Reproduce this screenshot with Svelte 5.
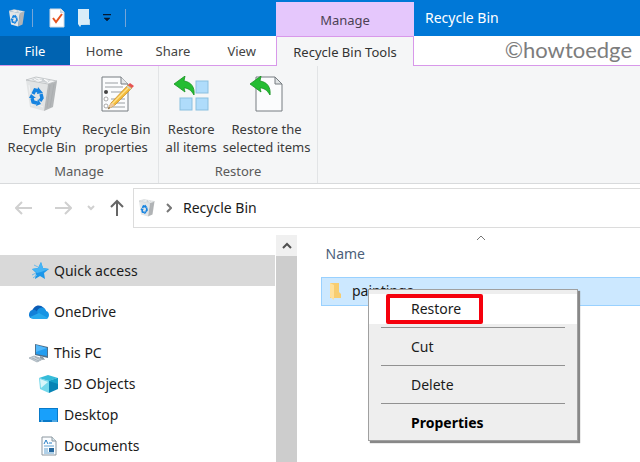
<!-- RecycleBinWindow.svelte -->
<script lang="ts">
  type NavItem = { label: string; icon: string; child?: boolean; gap?: boolean };

  // Sidebar entries
  const navItems: NavItem[] = [
    { label: 'Quick access', icon: 'star' },
    { label: 'OneDrive', icon: 'cloud', gap: true },
    { label: 'This PC', icon: 'pc', gap: true },
    { label: '3D Objects', icon: 'cube', child: true },
    { label: 'Desktop', icon: 'desktop', child: true },
    { label: 'Documents', icon: 'document', child: true }
  ];

  const menuItems = ['Restore', 'Cut', 'Delete', 'Properties'];

  let selectedNav = $state('Quick access');
  let hovered = $state('Restore');
</script>

{#snippet bin(size: number)}
  <svg width={size} height={size} viewBox="0 0 36 36" aria-hidden="true">
    <path d="M2 4 L24 8 L20 35 L6 31 Z" fill="#e2e4e5" />
    <path d="M24 8 L33 5 L29 31 L20 35 Z" fill="#b3b6b8" />
    <path d="M2 4 L12 1 L33 5 L24 8 Z" fill="#f4f5f6" stroke="#b6babd" stroke-width=".8" />
    <path d="M7 4 L11 2 L15 4 L19 2 L22 5 L27 4 L23 7 Z" fill="#cdd1d4" />
    <path d="M10 3 L14 5 L18 4 M20 3 L24 6" fill="none" stroke="#fff" />
    <path d="M26 9 L23 32 M30 8 L26 31" stroke="#a4a8ab" stroke-width=".6" />
    <path d="M5 9 L8 30 M10 27 L19 31" stroke="#f5f6f7" stroke-width=".8" />
    <g fill="none" stroke="#1683e0" stroke-width="3.4">
      <path d="M9 18 L11 14 L15 15" />
      <path d="M17 18 L18 22 L16 25" />
      <path d="M13 27 L9 26 L8 22" />
    </g>
    <path d="M14 11 L19 17 L13 18 Z M17 28 L12 30 L14 23 Z M5 22 L7 18 L12 22 Z" fill="#1683e0" />
  </svg>
{/snippet}

{#snippet undoArrow()}
  <path
    d="M1 8 L12 0 L11 5 C18 6 22 11 21 19 C18 14 15 12 11 12 L12 16 Z"
    fill="#24bd32"
    stroke="#169222"
    stroke-width=".8"
  />
{/snippet}

{#snippet navIcon(name: string)}
  <svg width="20" height="20" viewBox="0 0 20 20" aria-hidden="true">
    {#if name === 'star'}
      <path d="M12 1 L14 7 L20 8 L15 12 L16 18 L11 15 L6 18 L7 12 L3 8 L9 7 Z" fill="#1c97ea" />
      <path d="M12 1 L14 7 L20 8 L12 11 L8 12 L3 8 L9 7 Z" fill="#45b4f5" />
      <path d="M3 14 L7 12 M4 17 L8 14 M5 4 L9 6" stroke="#6dbbe8" />
    {:else if name === 'cloud'}
      <path d="M3 10 C4 4 10 1 15 6 L17 9 L6 14 Z" fill="#0a5bb5" />
      <path d="M1 16 C-2 11 2 7 6 8 L17 16 Z" fill="#1280d8" />
      <path d="M8 9 C11 4 16 5 17 9 C21 10 21 16 17 17 L9 13 Z" fill="#1694e4" />
      <path d="M1 15 L10 11 L19 16 Q18 17 16 17 L4 17 Q2 17 1 15 Z" fill="#27a9ed" />
    {:else if name === 'pc'}
      <path d="M6 1 L19 4 L19 15 L6 12 Z" fill="#50708b" />
      <path d="M7 2 L18 5 L18 13 L7 11 Z" fill="#239df0" />
      <path d="M7 2 L18 5 L7 9 Z" fill="#53b8fa" />
      <path d="M11 13 L14 14 L16 17 L11 16 Z" fill="#8c98a1" />
      <path d="M0 15 L5 13 L14 16 L8 19 Z" fill="#cbd3d9" stroke="#8999a5" stroke-width=".6" />
      <path d="M3 15 L10 18 M6 14 L12 17" stroke="#8999a5" stroke-width=".6" />
    {:else if name === 'cube'}
      <path d="M0 4 L10 7 L10 19 L1 15 Z" fill="#73d8eb" />
      <path d="M10 7 L19 4 L19 15 L10 19 Z" fill="#0784b5" />
      <path d="M0 4 L9 1 L19 4 L10 7 Z" fill="#36bcd9" />
      <path d="M1 5 L9 8 L2 14 Z" fill="#d7f6fa" />
      <path d="M10 7 L19 4 L19 10 Z" fill="#16a2c9" />
    {:else if name === 'desktop'}
      <rect x="0" y="3" width="19" height="14" fill="#087ac9" />
      <rect x="1" y="4" width="17" height="11" fill="#18a0fb" />
      <path d="M2 16 H4 M13 16 H18" stroke="#9ad5fa" />
    {:else}
      <path d="M3 1 H13 L17 5 V19 H3 Z" fill="#fbfdff" stroke="#8d98a0" />
      <path d="M13 1 V5 H17" fill="#d9e8ee" stroke="#8d98a0" />
      <path d="M5 8 L7 4 L9 8 M10 7 H13" fill="none" stroke="#267ec4" />
      <path d="M5 10 H15 M5 13 H9 M5 15 H9 M5 17 H15" stroke="#65a3d1" />
      <rect x="10" y="12" width="5" height="4" fill="#27699f" />
    {/if}
  </svg>
{/snippet}

<div class="window">
  <header>
    <div class="quick-bar">
      {@render bin(18)}
      <span class="divider"></span>
      <button class="quick check" aria-label="Properties">
        <svg width="16" height="20" viewBox="0 0 16 20">
          <path d="M1 1 H12 L15 4 V19 H1 Z" fill="#fff" stroke="#d4dbe2" />
          <path d="M11 1 V5 H15" fill="#c9d5df" />
          <path d="M4 10 L7 14 L13 6" fill="none" stroke="#e6531f" stroke-width="2" />
        </svg>
      </button>
      <button class="quick folder" aria-label="New folder">
        <svg width="14" height="20" viewBox="0 0 14 20">
          <path d="M1 1 H12 V11 L13 12 V17 H4 L3 19 L1 16 Z" fill="#d9edf8" />
          <path d="M12 11 L13 12 V17 H4 L3 19 L3 17 L12 16 Z" fill="#b9d9ec" />
        </svg>
      </button>
      <button class="quick more" aria-label="Customize toolbar">
        <svg width="8" height="8" viewBox="0 0 8 8">
          <path d="M0 0 H8 V1 H0 Z M1 4 H7 L4 7 Z" fill="#061a33" stroke="#061a33" stroke-width=".5" />
        </svg>
      </button>
      <span class="divider"></span>
    </div>
    <div class="context-head"><span>Manage</span></div>
    <h1>Recycle Bin</h1>

    <div class="tabs">
      <button class="file">File</button>
      <button>Home</button>
      <button>Share</button>
      <button>View</button>
    </div>
    <button class="active-tab">Recycle Bin Tools</button>
    <div class="watermark">©howtoedge</div>
  </header>

  <section class="ribbon">
    <div class="group">
      <div class="tools">
        <button>
          {@render bin(36)}
          <span>Empty<br />Recycle Bin</span>
        </button>
        <button>
          <svg width="36" height="36" viewBox="0 0 36 36" aria-hidden="true">
            <path d="M4 1 H23 L30 8 V35 H4 Z" fill="#fbfcfd" stroke="#777d81" />
            <path d="M23 1 V8 H30" fill="#e5e8ea" stroke="#777d81" />
            <circle cx="8" cy="16" r="2" fill="#444" />
            <circle cx="8" cy="23" r="2" fill="#fff" stroke="#888" stroke-width=".7" />
            <circle cx="8" cy="30" r="2" fill="#fff" stroke="#888" stroke-width=".7" />
            <path d="M7 7 H20 M7 11 H25 M13 16 H26 M13 23 H27 M13 27 H27 M13 31 H27" stroke="#9a9fa3" />
            <path d="M10 33 L13 27 L30 9 L34 12 L17 29 Z" fill="#f3bb3a" stroke="#c58b27" stroke-width=".7" />
            <path d="M14 28 L31 11" stroke="#ffe28b" stroke-width="1.5" />
            <path d="M30 9 L32 7 L36 10 L34 12 Z" fill="#e55353" />
            <path d="M29 10 L33 13" stroke="#c8d0d6" stroke-width="1.5" />
            <path d="M10 33 L13 27 L17 29 Z" fill="#efc9a0" />
            <path d="M10 33 L11 31 L12 32 Z" fill="#444" />
          </svg>
          <span>Recycle Bin<br />properties</span>
        </button>
      </div>
      <p>Manage</p>
    </div>
    <div class="group">
      <div class="tools">
        <button>
          <svg width="36" height="36" viewBox="0 0 36 36" aria-hidden="true">
            <g fill="#afdcfb" stroke="#8abfdf">
              <rect x="23" y="5" width="12" height="12" />
              <rect x="7" y="22" width="12" height="12" />
              <rect x="23" y="22" width="12" height="12" />
            </g>
            {@render undoArrow()}
          </svg>
          <span>Restore<br />all items</span>
        </button>
        <button>
          <svg width="36" height="36" viewBox="0 0 36 36" aria-hidden="true">
            <path d="M7 1 H26 L33 8 V35 H7 Z" fill="#fbfcfd" stroke="#777d81" />
            <path d="M26 1 V8 H33 Z" fill="#dfe3e5" stroke="#777d81" />
            {@render undoArrow()}
          </svg>
          <span>Restore the<br />selected items</span>
        </button>
      </div>
      <p>Restore</p>
    </div>
  </section>

  <nav class="address-row" aria-label="Address">
    <div class="history">
      <button aria-label="Back" disabled>
        <svg width="18" height="14" viewBox="0 0 18 14"><path d="M17 7 H2 M7 1 L1 7 L7 13" /></svg>
      </button>
      <button aria-label="Forward" disabled>
        <svg width="18" height="14" viewBox="0 0 18 14"><path d="M1 7 H16 M11 1 L17 7 L11 13" /></svg>
      </button>
      <button class="recent" aria-label="Recent locations" disabled>
        <svg width="8" height="6" viewBox="0 0 8 6"><path d="M1 1 L4 4 L7 1" /></svg>
      </button>
      <button class="up" aria-label="Up">
        <svg width="14" height="18" viewBox="0 0 14 18"><path d="M7 17 V2 M1 8 L7 2 L13 8" /></svg>
      </button>
    </div>
    <div class="address">
      {@render bin(18)}
      <svg class="crumb" width="6" height="10" viewBox="0 0 6 10"><path d="M1 1 L5 5 L1 9" /></svg>
      <a href="#recycle-bin">Recycle Bin</a>
    </div>
  </nav>

  <div class="body">
    <aside>
      {#each navItems as item}
        <button
          class="nav-item"
          class:child={item.child}
          class:gap={item.gap}
          class:selected={selectedNav === item.label}
          onclick={() => (selectedNav = item.label)}
        >
          {@render navIcon(item.icon)}
          {item.label}
        </button>
      {/each}
    </aside>

    <div class="scrollbar">
      <button aria-label="Scroll up">
        <svg width="10" height="8" viewBox="0 0 10 8"><path d="M1 6 L5 2 L9 6" /></svg>
      </button>
      <div class="thumb"></div>
    </div>

    <main>
      <div class="sort">
        <svg width="10" height="6" viewBox="0 0 10 6"><path d="M1 5 L5 1 L9 5" /></svg>
      </div>
      <table>
        <thead>
          <tr><th>Name</th></tr>
        </thead>
        <tbody>
          <tr>
            <td>
              <div class="file-name">
                <svg width="12" height="18" viewBox="0 0 12 18" aria-hidden="true">
                  <path d="M0 1 H9 V10 L11 12 V16 H0 Z" fill="#f7cd70" />
                  <path d="M0 1 L4 3 V18 L0 15 Z" fill="#ffe09a" />
                </svg>
                paintings
              </div>
            </td>
          </tr>
        </tbody>
      </table>

      <div class="menu" role="menu">
        {#each menuItems as item, i}
          {#if i > 0}<hr />{/if}
          <button
            role="menuitem"
            class:hovered={hovered === item}
            class:bold={item === 'Properties'}
            onmouseenter={() => (hovered = item)}
          >
            {item}
          </button>
        {/each}
        <div class="marker"></div>
      </div>
    </main>
  </div>
</div>

<style>
  :global(body) {
    background: #fff;
    overflow: hidden;
  }

  .window {
    display: flex;
    flex-direction: column;
    min-height: 100vh;
    font-family: 'Noto Sans', 'Open Sans', sans-serif;
    font-size: 14px;
    line-height: 20px;
    color: #1b1b1b;
  }

  button {
    margin: 0;
    padding: 0;
    border: 0;
    background: none;
    font: inherit;
    color: inherit;
  }

  svg {
    display: block;
    flex: none;
  }

  /* Title bar and tabs */
  header {
    display: grid;
    grid-template-columns: 276px 138px 1fr;
    grid-template-rows: 36px 30px;
    font-size: 13px;
  }

  .quick-bar,
  h1,
  .context-head {
    background: #0078d7;
  }

  .quick-bar {
    display: flex;
    align-items: center;
    padding-left: 8px;
  }

  .divider {
    width: 1px;
    height: 18px;
    margin-left: 6px;
    background: #75a5d8;
  }

  .quick.check {
    margin-left: 16px;
  }

  .quick.folder {
    margin-left: 12px;
  }

  .quick.more {
    margin: 0 8px 0 12px;
  }

  .context-head {
    padding-top: 2px;
  }

  .context-head span {
    display: flex;
    align-items: center;
    justify-content: center;
    height: 34px;
    padding-top: 2px;
    box-sizing: border-box;
    background: #e5c7fc;
    color: #4c4254;
  }

  h1 {
    margin: 0;
    padding-left: 11px;
    color: #fff;
    font-size: 14px;
    font-weight: 400;
    line-height: 36px;
  }

  .tabs {
    display: flex;
    border-bottom: 1px solid #d898ea;
    color: #444;
  }

  .tabs button {
    flex: 1;
  }

  .tabs .file {
    flex: 0 0 70px;
    background: #0063b1;
    color: #fff;
  }

  .active-tab {
    border: 1px solid #d898ea;
    border-bottom: 0;
    background: #f5f6f7;
    color: #333;
  }

  .watermark {
    padding-right: 8px;
    border-bottom: 1px solid #d898ea;
    color: #7d7d7d;
    font-family: Lato, sans-serif;
    font-size: 22px;
    line-height: 28px;
    text-align: right;
  }

  /* Ribbon */
  .ribbon {
    display: flex;
    height: 117px;
    border-bottom: 1px solid #d8dadc;
    background: #f5f6f7;
    color: #3b3b3b;
    font-size: 13px;
    line-height: 18px;
  }

  .group {
    display: flex;
    flex-direction: column;
    width: 158px;
    border-right: 1px solid #e2e4e6;
  }

  .tools {
    display: flex;
    justify-content: center;
    gap: 6px;
    padding-top: 10px;
  }

  .tools button {
    display: flex;
    flex-direction: column;
    align-items: center;
    gap: 8px;
    white-space: nowrap;
  }

  .group p {
    margin: 6px 0 0;
    color: #5a5a5a;
    text-align: center;
  }

  /* Address bar */
  .address-row {
    display: flex;
    align-items: center;
    padding-top: 4px;
  }

  .history {
    display: flex;
    align-items: center;
    gap: 21px;
    width: 118px;
    padding-left: 15px;
  }

  .history svg,
  .crumb,
  .scrollbar svg,
  .sort svg {
    fill: none;
    stroke: #d0d0d0;
    stroke-width: 2;
  }

  .history .recent {
    margin-left: -6px;
  }

  .history .up {
    margin-left: -6px;
  }

  .history .up svg {
    stroke: #666;
  }

  .address {
    display: flex;
    flex: 1;
    align-items: center;
    height: 38px;
    padding-left: 4px;
    border: 1px solid #dcdcdc;
    border-right: 0;
  }

  .crumb {
    margin: 0 11px 0 10px;
    stroke: #777;
  }

  .address a {
    color: inherit;
    text-decoration: none;
  }

  /* Body */
  .body {
    display: flex;
    flex: 1;
  }

  aside {
    width: 276px;
    padding-top: 27px;
  }

  .nav-item {
    display: flex;
    align-items: center;
    gap: 5px;
    width: 275px;
    height: 31px;
    padding-left: 29px;
    text-align: left;
  }

  .nav-item.gap {
    margin-top: 10px;
  }

  .nav-item.child {
    padding-left: 39px;
  }

  .nav-item.selected {
    background: #d9d9d9;
  }

  .scrollbar {
    display: flex;
    flex-direction: column;
    width: 21px;
    padding-top: 7px;
  }

  .scrollbar button {
    display: grid;
    place-items: center;
    height: 21px;
    background: #f0f0f0;
  }

  .scrollbar svg {
    stroke: #505050;
  }

  .thumb {
    flex: 1;
    background: #cdcdcd;
  }

  main {
    position: relative;
    flex: 1;
    padding-left: 24px;
  }

  .sort {
    display: flex;
    justify-content: center;
    padding-top: 7px;
  }

  .sort svg {
    stroke: #777;
    stroke-width: 1;
  }

  table {
    width: 100%;
    border-collapse: collapse;
  }

  th {
    height: 36px;
    padding: 0 4px 10px;
    box-sizing: border-box;
    color: #4c607a;
    font-weight: 400;
    text-align: left;
    vertical-align: middle;
  }

  td {
    padding: 0;
    border: 1px solid #99d1ff;
    border-right: 0;
    background: #cce8ff;
  }

  .file-name {
    display: flex;
    align-items: center;
    gap: 10px;
    height: 27px;
    padding-left: 8px;
  }

  /* Context menu */
  .menu {
    position: absolute;
    top: 61px;
    left: 71px;
    display: flex;
    flex-direction: column;
    width: 208px;
    padding: 4px 0 2px;
    border: 1px solid #a0a0a0;
    background: #eee;
    box-shadow: 2px 2px 1px #888;
  }

  .menu button {
    height: 30px;
    padding-left: 42px;
    text-align: left;
  }

  .menu .hovered {
    background: #fff;
  }

  .menu .bold {
    color: #000;
    font-weight: 700;
  }

  .menu hr {
    width: 184px;
    height: 1px;
    margin: 3px auto 4px;
    border: 0;
    background: #919191;
  }

  .marker {
    position: absolute;
    top: 4px;
    left: 17px;
    box-sizing: border-box;
    width: 97px;
    height: 30px;
    border: 4px solid #f5000c;
    border-radius: 2px;
    pointer-events: none;
  }
</style>
